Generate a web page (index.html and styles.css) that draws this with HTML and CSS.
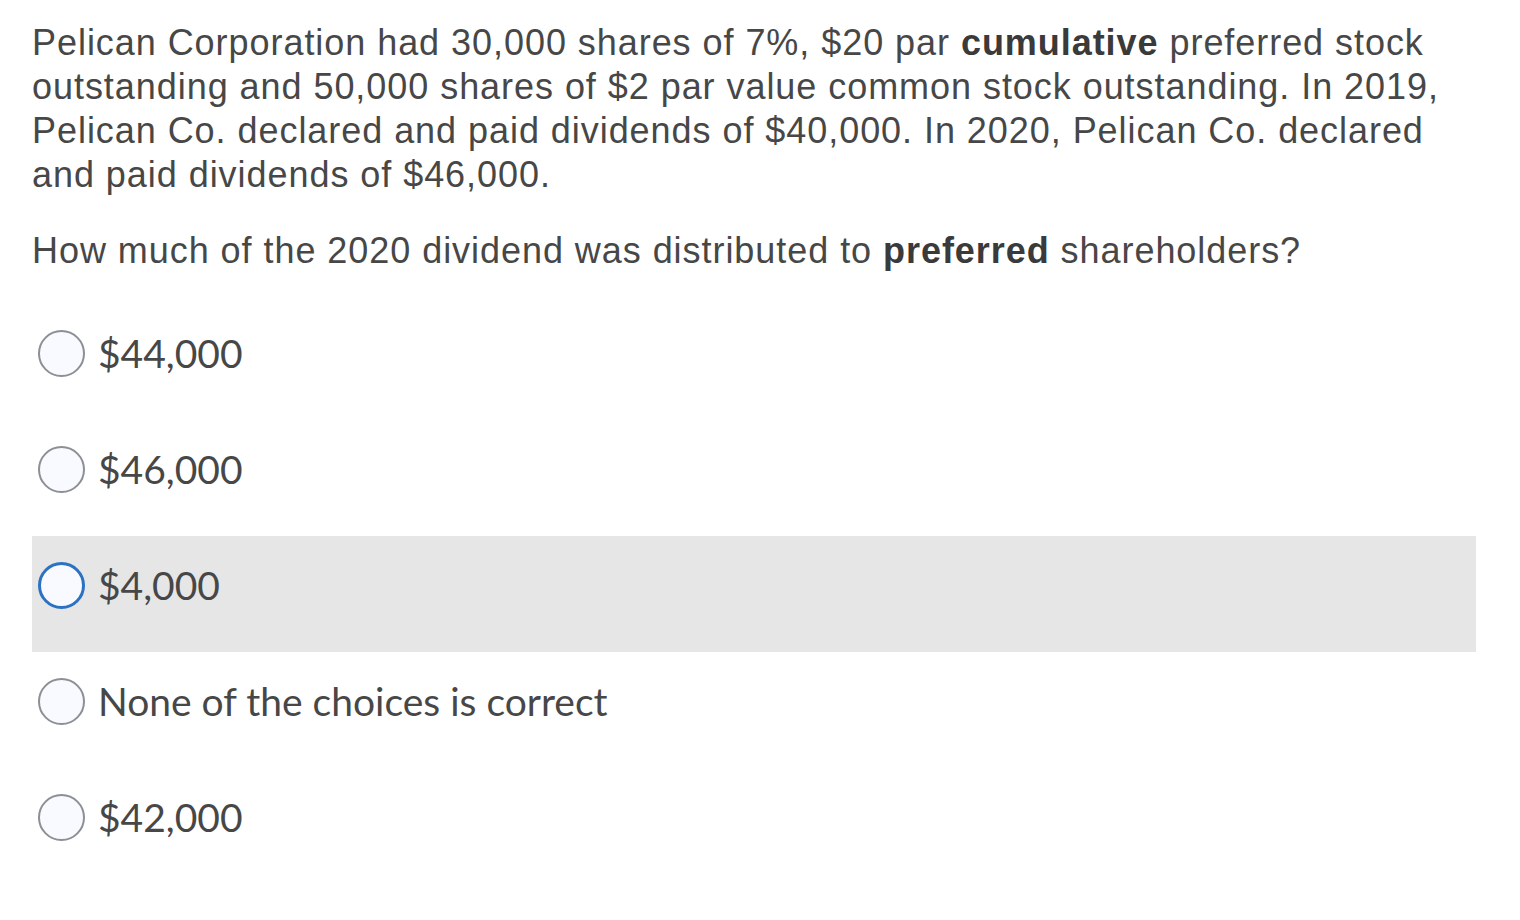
FILE: index.html
```html
<!DOCTYPE html>
<html>
<head>
<meta charset="utf-8">
<link rel="stylesheet" href="styles.css">
</head>
<body>
<div class="page">
  <div class="question">
    <p>Pelican Corporation had 30,000 shares of 7%, $20 par <b>cumulative</b> preferred stock outstanding and 50,000 shares of $2 par value common stock outstanding. In 2019, Pelican Co. declared and paid dividends of $40,000. In 2020, Pelican Co. declared and paid dividends of $46,000.</p>
    <p>How much of the 2020 dividend was distributed to <b>preferred</b> shareholders?</p>
  </div>
  <div class="options">
    <div class="option"><span class="radio"></span><span class="label">$44,000</span></div>
    <div class="option"><span class="radio"></span><span class="label">$46,000</span></div>
    <div class="option focused"><span class="radio"></span><span class="label">$4,000</span></div>
    <div class="option"><span class="radio"></span><span class="label">None of the choices is correct</span></div>
    <div class="option"><span class="radio"></span><span class="label">$42,000</span></div>
  </div>
</div>
</body>
</html>
```

FILE: styles.css
```css
html, body {
  margin: 0;
  padding: 0;
  background: #ffffff;
}
.page {
  padding: 21px 44px 0 32px;
  width: 1444px;
}
.question {
  font-family: "Liberation Sans", Arial, sans-serif;
  font-size: 36px;
  line-height: 44px;
  letter-spacing: 0.95px;
  color: #474747;
  width: 1420px;
}
.question p {
  margin: 0 0 32px 0;
}
.question p:last-child {
  margin-bottom: 31px;
}
.question b {
  color: #3a3a3a;
}
.options {
  display: flex;
  flex-direction: column;
}
.option {
  height: 116px;
  display: flex;
  align-items: flex-start;
  padding-top: 26px;
  box-sizing: border-box;
  font-family: Lato, "Liberation Sans", sans-serif;
  font-size: 39px;
  color: #474747;
}
.option.focused {
  background: #e6e6e6;
}
.radio {
  width: 43px;
  height: 43px;
  border: 2px solid #8c8f93;
  border-radius: 50%;
  background: #f8faff;
  margin-left: 6px;
  margin-right: 13px;
  flex: none;
}
.focused .radio {
  width: 41px;
  height: 41px;
  border: 3px solid #2b72c2;
}
.label {
  line-height: 47px;
}
```
